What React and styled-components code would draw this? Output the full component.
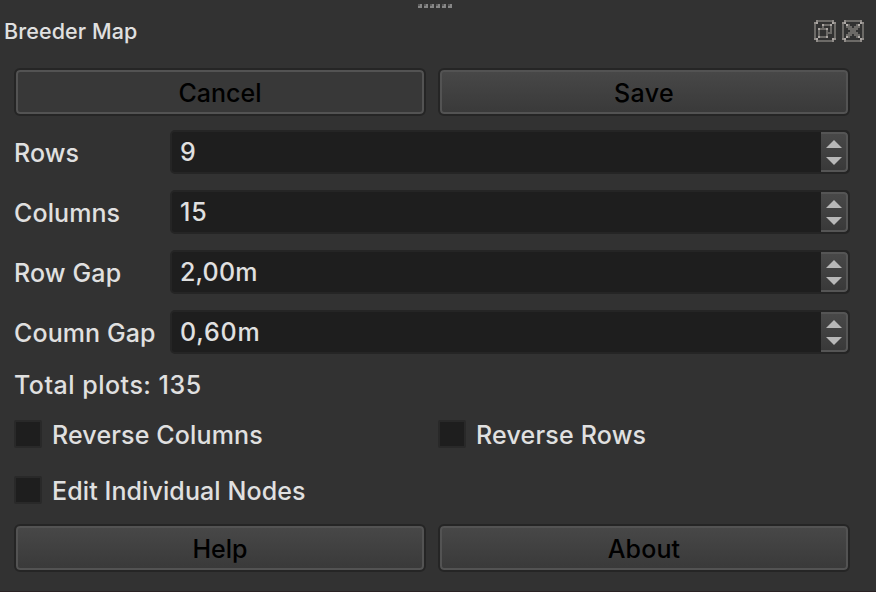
import React from "react";
import styled, { createGlobalStyle } from "styled-components";

const Global = createGlobalStyle`
  * { box-sizing: border-box; }
  body { margin: 0; background: #323232; overflow: hidden; }
  button, input { font: inherit; }
`;

const Dock = styled.main`
  width: 876px;
  height: 592px;
  padding-top: 4px;
  background: #323232;
  border-bottom: 1px solid #2a2224;
  color: #e0e0e0;
  font: 500 25px/30px Inter, sans-serif;
`;

const Grip = styled.div`
  display: flex;
  gap: 2px;
  width: 34px;
  margin-left: 418px;
`;

const GripDot = styled.i`
  width: 4px;
  height: 4px;
  background: linear-gradient(#5d5d5d, #5d5d5d) 0 0 / 2px 2px no-repeat #868686;
`;

const TitleBar = styled.header`
  display: flex;
  align-items: center;
  height: 46px;
  padding: 0 12px 0 4px;
`;

const Title = styled.h1`
  flex: 1;
  margin: 0;
  font-size: 21.5px;
  font-weight: 500;
  letter-spacing: 0.1px;
`;

const TitleButtons = styled.div`
  display: flex;
  gap: 6px;
`;

const PixelIcon = styled.svg`
  display: block;
  width: 22px;
  height: 22px;
  shape-rendering: crispEdges;
`;

const Content = styled.section`
  padding: 14px 26px 0 14px;
`;

const ButtonRow = styled.div`
  display: grid;
  grid-template-columns: 1fr 1fr;
  gap: 12px;
`;

const Button = styled.button`
  height: 48px;
  padding: 2px 0 0;
  border: 2px solid #252525;
  border-radius: 6px;
  box-shadow: inset 0 0 0 2px #535353;
  background: ${(p) => (p.$flat ? "#383838" : "linear-gradient(#484848, #393939)")};
  color: #000;
  letter-spacing: ${(p) => p.$track || 0}px;
`;

const Form = styled.div`
  display: grid;
  gap: 16px;
  margin-top: 14px;
`;

const Field = styled.label`
  display: grid;
  grid-template-columns: 156px 1fr;
  align-items: center;
  height: 44px;
`;

const Text = styled.span`
  padding-top: ${(p) => p.$drop || 0}px;
  white-space: nowrap;
  letter-spacing: ${(p) => p.$track || 0}px;
`;

const SpinBox = styled.div`
  display: flex;
  height: 44px;
  border: 2px solid #252525;
  border-radius: 5px;
  background: #1e1e1e;
  overflow: hidden;
`;

const Value = styled.span`
  flex: 1;
  padding-left: 8px;
  line-height: 40px;
  letter-spacing: ${(p) => p.$track || 0}px;
`;

const Stepper = styled.span`
  width: 27px;
  border: 2px solid #555;
  border-left: 0;
  border-radius: 0 4px 4px 0;
  background: linear-gradient(#484848, #393939);
`;

const Arrows = styled.svg`
  display: block;
  width: 25px;
  height: 36px;
  fill: #b8b8b8;
`;

const Total = styled.p`
  height: 30px;
  margin: 16px 0 20px;
`;

const Checks = styled.div`
  display: grid;
  grid-template-columns: 424px 1fr;
  row-gap: 28px;
  margin-bottom: 20px;
`;

const Check = styled.label`
  display: flex;
  align-items: center;
  gap: 10px;
  height: 28px;
`;

const Box = styled.i`
  width: 28px;
  height: 28px;
  border: 2px solid #292929;
  border-radius: 2px;
  background: #1e1e1e;
`;

const fields = [
  { label: "Rows", value: "9", labelTrack: 0.1, valueTrack: 0 },
  { label: "Columns", value: "15", labelTrack: 0.1, valueTrack: 0.8 },
  { label: "Row Gap", value: "2,00m", labelTrack: 0.15, valueTrack: 0.15 },
  { label: "Coumn Gap", value: "0,60m", labelTrack: 0.1, valueTrack: 0.8 },
];

const iconColors = { "+": "#8f8b88", "@": "#6c6a67", "#": "#aba6a3", $: "#b5b0ac" };

const floatIcon = [
  " +@@@@@@@+ ",
  "+#       #+",
  "@   #@@@# @",
  "@   @   @ @",
  "@ #@@@# @ @",
  "@ @   @ @ @",
  "@ @   @@@ @",
  "@ @   @   @",
  "@ #@@@#   @",
  "+#       #+",
  " +@@@@@@@+ ",
];

const closeIcon = [
  " +@@@@@@@+ ",
  "+#       #+",
  "@ $@   @$ @",
  "@ @@@ @@@ @",
  "@  @@@@@  @",
  "@   @@@   @",
  "@  @@@@@  @",
  "@ @@@ @@@ @",
  "@ $@   @$ @",
  "+#       #+",
  " +@@@@@@@+ ",
];

const Bitmap = ({ rows }) => (
  <PixelIcon viewBox="0 0 11 11">
    {Object.entries(iconColors).map(([key, fill]) => (
      <path
        key={key}
        fill={fill}
        d={rows
          .flatMap((row, y) => [...row].map((c, x) => (c === key ? `M${x} ${y}h1v1h-1z` : "")))
          .join("")}
      />
    ))}
  </PixelIcon>
);

export default function App() {
  return (
    <>
      <Global />
      <Dock>
        <Grip>{[0, 1, 2, 3, 4, 5].map((n) => <GripDot key={n} />)}</Grip>
        <TitleBar>
          <Title>Breeder Map</Title>
          <TitleButtons>
            <Bitmap rows={floatIcon} />
            <Bitmap rows={closeIcon} />
          </TitleButtons>
        </TitleBar>
        <Content>
          <ButtonRow>
            <Button $flat>Cancel</Button>
            <Button $track={0.4}>Save</Button>
          </ButtonRow>
          <Form>
            {fields.map((f) => (
              <Field key={f.label}>
                <Text $drop={2} $track={f.labelTrack}>{f.label}</Text>
                <SpinBox>
                  <Value $track={f.valueTrack}>{f.value}</Value>
                  <Stepper>
                    <Arrows viewBox="0 0 25 36">
                      <path d="M13 6l8 8H5zM5 23h16l-8 8z" />
                    </Arrows>
                  </Stepper>
                </SpinBox>
              </Field>
            ))}
          </Form>
          <Total><Text $track={0.5}>Total plots: 135</Text></Total>
          <Checks>
            <Check><Box /><Text $drop={2} $track={0.15}>Reverse Columns</Text></Check>
            <Check><Box /><Text $drop={2} $track={0.2}>Reverse Rows</Text></Check>
            <Check><Box /><Text $drop={2} $track={0.1}>Edit Individual Nodes</Text></Check>
          </Checks>
          <ButtonRow>
            <Button>Help</Button>
            <Button $track={0.15}>About</Button>
          </ButtonRow>
        </Content>
      </Dock>
    </>
  );
}
